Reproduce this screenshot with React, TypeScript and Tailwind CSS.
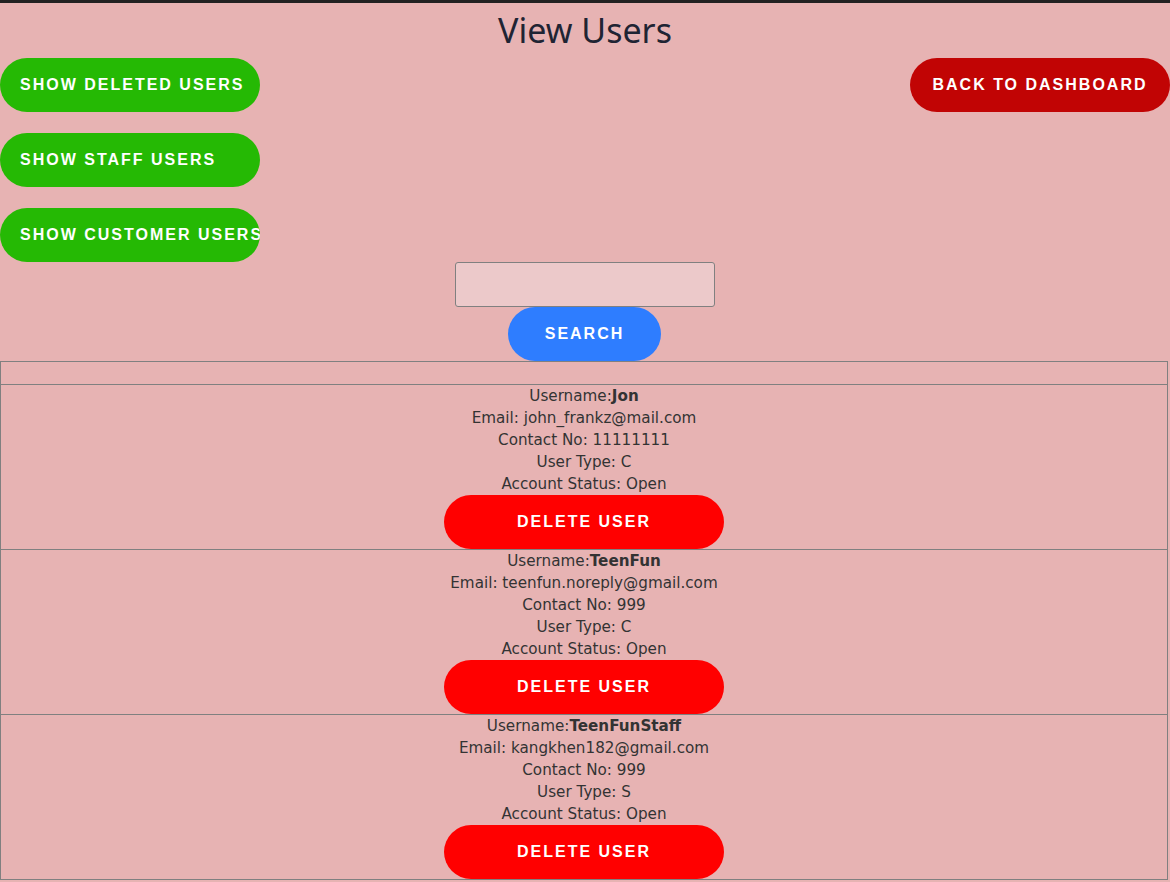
const users = [
  { username: "Jon", email: "john_frankz@mail.com", contact: "11111111", type: "C", status: "Open" },
  { username: "TeenFun", email: "teenfun.noreply@gmail.com", contact: "999", type: "C", status: "Open" },
  { username: "TeenFunStaff", email: "kangkhen182@gmail.com", contact: "999", type: "S", status: "Open" },
]

const btn =
  "h-[54px] rounded-full text-white font-bold text-[16px] tracking-[2px] uppercase overflow-hidden whitespace-nowrap font-['Liberation_Sans',Arial,sans-serif]"

export default function App() {
  return (
    <div className="min-h-screen bg-[#e7b3b3] border-t-[3px] border-[#222222] font-['DejaVu_Sans',Verdana,sans-serif] text-[15.2px] text-[#333333]">
      <h1 className="text-center text-[34px] leading-[55px] text-[#1f2433] font-['Noto_Sans',sans-serif]">
        View Users
      </h1>
      <div className="flex justify-between items-start">
        <div className="flex flex-col gap-[21px]">
          <button className={`${btn} w-[260px] bg-[#25b904] text-left pl-5`}>Show Deleted Users</button>
          <button className={`${btn} w-[260px] bg-[#25b904] text-left pl-5`}>Show Staff Users</button>
          <button className={`${btn} w-[260px] bg-[#25b904] text-left pl-5`}>Show Customer Users</button>
        </div>
        <button className={`${btn} w-[260px] bg-[#c10404] text-center`}>Back to Dashboard</button>
      </div>
      <div className="flex flex-col items-center pr-[1px]">
        <input
          type="text"
          className="w-[260px] h-[45px] bg-[#ecc9ca] border border-[#808080] rounded-[3px] outline-none"
        />
        <button className={`${btn} w-[153px] bg-[#2e7dff] text-center`}>Search</button>
      </div>
      <table className="w-[1168px] border-collapse border border-[#808080]">
        <tbody>
          <tr className="border border-[#808080]">
            <td className="h-[23px]"></td>
          </tr>
          {users.map((u) => (
            <tr key={u.username} className="border border-[#808080]">
              <td className="text-center leading-[22px] p-0">
                <div>
                  Username:<b>{u.username}</b>
                </div>
                <div>Email: {u.email}</div>
                <div>Contact No: {u.contact}</div>
                <div>User Type: {u.type}</div>
                <div>Account Status: {u.status}</div>
                <button className={`${btn} w-[280px] bg-[#ff0000] text-center`}>Delete User</button>
              </td>
            </tr>
          ))}
        </tbody>
      </table>
    </div>
  )
}
